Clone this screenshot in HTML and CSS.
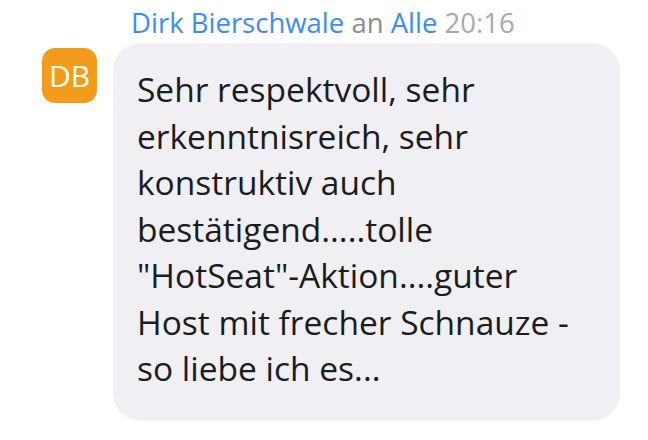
FILE: index.html
```html
<!DOCTYPE html>
<html lang="de">
<head>
    <meta charset="UTF-8">
    <title>Chat</title>
    <link rel="stylesheet" href="styles.css">
</head>
<body>

    <div class="message">
        <div class="avatar">DB</div>
        <div class="content">
            <div class="meta">
                <span class="name">Dirk Bierschwale</span>
                <span class="to">an</span>
                <span class="name">Alle</span>
                <span class="time">20:16</span>
            </div>
            <div class="bubble">
                Sehr respektvoll, sehr<br>
                erkenntnisreich, sehr<br>
                konstruktiv auch<br>
                bestätigend.....tolle<br>
                "HotSeat"-Aktion....guter<br>
                Host mit frecher Schnauze -<br>
                so liebe ich es...
            </div>
        </div>
    </div>

</body>
</html>
```

FILE: styles.css
```css
body {
    margin: 0;
    background-color: #ffffff;
    font-family: "Open Sans", "Noto Sans", sans-serif;
}
.message {
    display: flex;
    gap: 16px;
    padding: 0 28px 0 42px;
}
.avatar {
    flex: none;
    width: 55px;
    height: 55px;
    margin-top: 48px;
    border-radius: 13px;
    background-color: #f39c1c;
    color: #ffffff;
    font-size: 30px;
    line-height: 55px;
    text-align: center;
}
.content {
    flex: 1;
}
.meta {
    padding-left: 18px;
    height: 43px;
    font-size: 27.5px;
    line-height: 45px;
    white-space: nowrap;
}
.name {
    color: #3b8cf5;
}
.to {
    color: #8c8c8c;
}
.time {
    color: #a8a8b0;
}
.bubble {
    background-color: #efeff4;
    border-radius: 28px;
    padding: 23px 24px 29px 24px;
    color: #1c1c1c;
    font-size: 33.5px;
    line-height: 46.5px;
    white-space: nowrap;
}
```
